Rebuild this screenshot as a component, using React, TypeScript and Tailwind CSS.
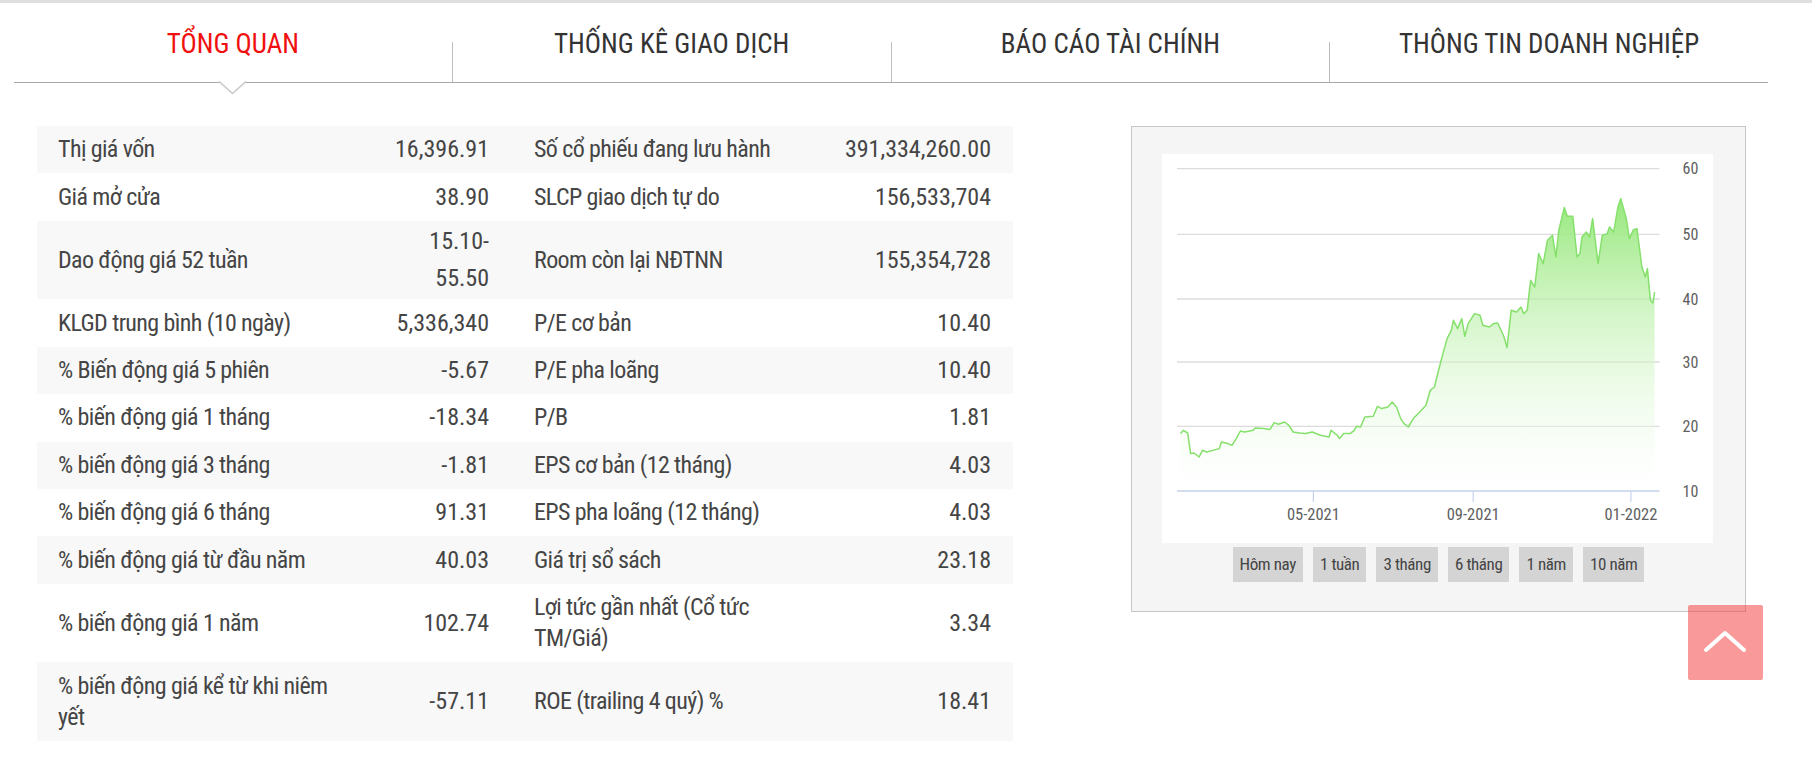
import React from "react";

const NARROW = "font-['Roboto_Condensed','Liberation_Sans_Narrow',Roboto,sans-serif]";

type Row = {
  l1: React.ReactNode;
  v1: React.ReactNode;
  l2: React.ReactNode;
  v2: string;
  tall?: boolean;
};

const rows: Row[] = [
  { l1: "Thị giá vốn", v1: "16,396.91", l2: "Số cổ phiếu đang lưu hành", v2: "391,334,260.00" },
  { l1: "Giá mở cửa", v1: "38.90", l2: "SLCP giao dịch tự do", v2: "156,533,704" },
  {
    l1: "Dao động giá 52 tuần",
    v1: (
      <span className="block leading-[37px]">
        15.10-
        <br />
        55.50
      </span>
    ),
    l2: "Room còn lại NĐTNN",
    v2: "155,354,728",
    tall: true,
  },
  { l1: "KLGD trung bình (10 ngày)", v1: "5,336,340", l2: "P/E cơ bản", v2: "10.40" },
  { l1: "% Biến động giá 5 phiên", v1: "-5.67", l2: "P/E pha loãng", v2: "10.40" },
  { l1: "% biến động giá 1 tháng", v1: "-18.34", l2: "P/B", v2: "1.81" },
  { l1: "% biến động giá 3 tháng", v1: "-1.81", l2: "EPS cơ bản (12 tháng)", v2: "4.03" },
  { l1: "% biến động giá 6 tháng", v1: "91.31", l2: "EPS pha loãng (12 tháng)", v2: "4.03" },
  { l1: "% biến động giá từ đầu năm", v1: "40.03", l2: "Giá trị sổ sách", v2: "23.18" },
  {
    l1: "% biến động giá 1 năm",
    v1: "102.74",
    l2: (
      <>
        Lợi tức gần nhất (Cổ tức
        <br />
        TM/Giá)
      </>
    ),
    v2: "3.34",
    tall: true,
  },
  {
    l1: (
      <>
        % biến động giá kể từ khi niêm
        <br />
        yết
      </>
    ),
    v1: "-57.11",
    l2: "ROE (trailing 4 quý) %",
    v2: "18.41",
    tall: true,
  },
];

const tabs = ["TỔNG QUAN", "THỐNG KÊ GIAO DỊCH", "BÁO CÁO TÀI CHÍNH", "THÔNG TIN DOANH NGHIỆP"];

// raw points read from reference (zoom coordinates)
const raw: [number, number][] = [
  [148, 970], [155, 960], [165, 968], [172, 1030], [180, 1028], [192, 1040], [200, 1020], [210, 1025],
  [240, 1015], [245, 995], [260, 1000], [270, 1005], [280, 985], [290, 962], [300, 965], [320, 960],
  [325, 953], [345, 955], [360, 958], [370, 937], [380, 942], [395, 935], [405, 945], [415, 965],
  [430, 968], [445, 970], [460, 965], [480, 975], [500, 980], [505, 960], [520, 975], [525, 985],
  [535, 970], [550, 970], [560, 960], [565, 948], [575, 950], [585, 920], [605, 918], [615, 888],
  [625, 895], [640, 890], [650, 875], [660, 890], [670, 925], [678, 940], [688, 950], [700, 925],
  [715, 905], [730, 885], [740, 840], [750, 830], [760, 780], [770, 730], [780, 685], [790, 660],
  [795, 630], [805, 655], [815, 625], [822, 678], [830, 640], [845, 610], [858, 615], [865, 645],
  [880, 650], [890, 640], [900, 638], [908, 660], [915, 680], [922, 712], [932, 600], [945, 605],
  [955, 590], [962, 610], [970, 600], [978, 510], [988, 530], [997, 430], [1008, 460], [1018, 390],
  [1030, 375], [1038, 440], [1045, 360], [1058, 292], [1065, 318], [1078, 318], [1088, 440],
  [1095, 430], [1100, 380], [1110, 365], [1118, 380], [1125, 325], [1138, 460], [1148, 375],
  [1160, 370], [1165, 350], [1175, 365], [1185, 290], [1192, 265], [1205, 325], [1212, 385],
  [1222, 358], [1230, 355], [1242, 470], [1250, 500], [1255, 475], [1262, 570], [1268, 578],
  [1272, 545],
];

const pts = raw.map(([xz, yz]) => [xz / 2.371 - 43.9, yz / 3 - 43.7] as [number, number]);
const AXIS_Y = 337;
const linePath = pts.map((p, i) => `${i === 0 ? "M" : "L"}${p[0].toFixed(1)},${p[1].toFixed(1)}`).join(" ");
const areaPath = `${linePath} L${pts[pts.length - 1][0].toFixed(1)},${AXIS_Y} L${pts[0][0].toFixed(1)},${AXIS_Y} Z`;

const grid: [string, number][] = [
  ["60", 14.6],
  ["50", 80.3],
  ["40", 145],
  ["30", 208],
  ["20", 272.3],
  ["10", 337],
];

const ticks: [string, number][] = [
  ["05-2021", 151.4],
  ["09-2021", 311.2],
  ["01-2022", 468.9],
];

const SVG_FONT = "'Roboto Condensed','Liberation Sans Narrow',Roboto,sans-serif";

function Chart() {
  return (
    <svg width="551" height="389" viewBox="0 0 551 389" className="block">
      <defs>
        <linearGradient id="areaFill" x1="0" y1="0" x2="0" y2="1">
          <stop offset="0" stopColor="#96e87b" stopOpacity="1" />
          <stop offset="1" stopColor="#ffffff" stopOpacity="0.2" />
        </linearGradient>
      </defs>
      {grid.slice(0, 5).map(([, y]) => (
        <line key={y} x1="15" x2="497.5" y1={y} y2={y} stroke="#dcdcdc" strokeWidth="1.3" />
      ))}
      <path d={areaPath} fill="url(#areaFill)" />
      <path d={linePath} fill="none" stroke="#86e06c" strokeWidth="1.5" strokeLinejoin="round" />
      <line x1="15" x2="497.5" y1={AXIS_Y} y2={AXIS_Y} stroke="#c6d2ea" strokeWidth="1.6" />
      {ticks.map(([, x]) => (
        <line key={x} x1={x} x2={x} y1={AXIS_Y} y2={AXIS_Y + 11} stroke="#c6d2ea" strokeWidth="1.2" />
      ))}
      {grid.map(([t, y]) => (
        <text key={t} x="520.5" y={y + 5.8} fontSize="16" fill="#606060" fontFamily={SVG_FONT}>
          {t}
        </text>
      ))}
      {ticks.map(([t, x]) => (
        <text
          key={t}
          x={x}
          y="365.6"
          fontSize="16.5"
          textAnchor="middle"
          fill="#606060"
          fontFamily={SVG_FONT}
        >
          {t}
        </text>
      ))}
    </svg>
  );
}

export default function App() {
  return (
    <div className={`min-h-[763px] w-[1812px] bg-white text-[#454545] ${NARROW}`}>
      <div className="h-[3px] w-full bg-[#dedede]" />

      {/* Tabs */}
      <div className="relative ml-[14px] mr-[44px] flex h-[80px] items-stretch border-b border-[#a9a9a9]">
        {tabs.map((t, i) => (
          <React.Fragment key={t}>
            {i > 0 && <div className="h-[40px] w-px self-end bg-[#bdbdbd]" />}
            <div className="relative flex flex-1 items-center justify-center pt-[4px]">
              <span
                className={`text-[27px] leading-none ${i === 0 ? "text-[#f01010]" : "text-[#333333]"}`}
              >
                {t}
              </span>
              {i === 0 && (
                <svg
                  width="29"
                  height="14"
                  viewBox="0 0 29 14"
                  className="absolute left-1/2 top-full -ml-[14.5px] -mt-[1px]"
                >
                  <polygon points="0,0 29,0 14.5,13" fill="#ffffff" />
                  <polyline points="1,0.5 14.5,12.5 28,0.5" fill="none" stroke="#c9c9c9" strokeWidth="1.6" />
                </svg>
              )}
            </div>
          </React.Fragment>
        ))}
      </div>

      {/* Content */}
      <div className="mt-[43px] flex items-start gap-[118px] px-[37px]">
        {/* Table */}
        <div className="w-[976px] text-[24px]">
          {rows.map((r, i) => (
            <div
              key={i}
              className={`grid grid-cols-[338px_135px_290px_213px] items-center ${
                r.tall ? "h-[78.6px]" : "h-[47.4px]"
              } ${i % 2 === 0 ? "bg-[#f8f8f8]" : "bg-white"}`}
            >
              <div className="pl-[21px] leading-[31px] tracking-[-0.6px]">{r.l1}</div>
              <div className="whitespace-nowrap pr-[21px] text-right leading-[31px]">{r.v1}</div>
              <div className="pl-[24px] leading-[31px] tracking-[-0.6px]">{r.l2}</div>
              <div className="whitespace-nowrap pr-[22px] text-right leading-[31px]">{r.v2}</div>
            </div>
          ))}
        </div>

        {/* Chart box */}
        <div className="w-[615px] border border-[#c6c6c6] bg-[#f5f5f5] px-[30px] pb-[29px] pt-[27px]">
          <div className="h-[389px] w-[551px] bg-white">
            <Chart />
          </div>
          <div className="mt-[4px] flex justify-center gap-[10px] text-[17px] tracking-[-0.4px] text-[#444444]">
            {["Hôm nay", "1 tuần", "3 tháng", "6 tháng", "1 năm", "10 năm"].map((b) => (
              <div key={b} className="flex h-[35px] items-center bg-[#d4d4d4] px-[7px] leading-none">
                {b}
              </div>
            ))}
          </div>
        </div>
      </div>

      {/* Scroll to top */}
      <div className="fixed bottom-[83px] right-[49px] flex h-[75px] w-[75px] items-center justify-center rounded-[2px] bg-[rgba(244,60,60,0.52)]">
        <svg width="75" height="75" viewBox="0 0 75 75">
          <polyline
            points="18,45 37,28 56,45"
            fill="none"
            stroke="#ffffff"
            strokeWidth="4"
            strokeLinecap="round"
            strokeLinejoin="round"
          />
        </svg>
      </div>
    </div>
  );
}
